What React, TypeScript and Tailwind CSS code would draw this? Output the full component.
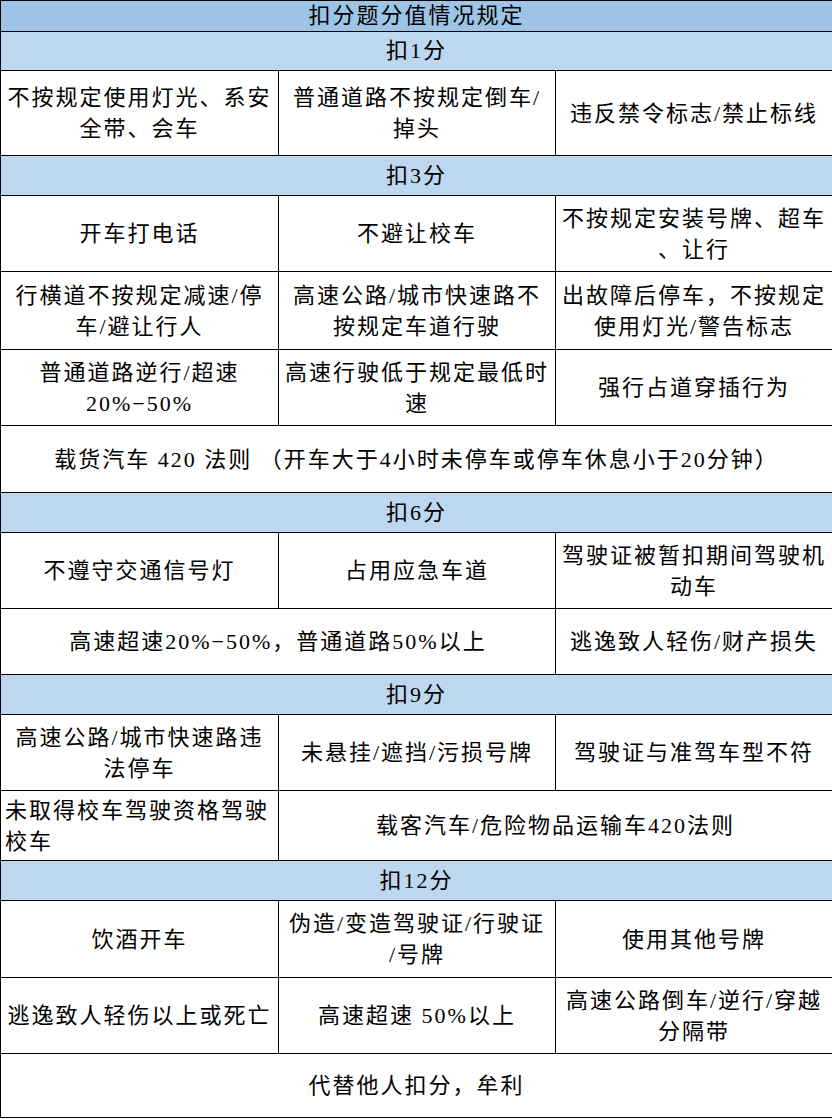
import type { ReactNode } from "react";

const font = "font-['Liberation_Serif','Noto_Sans_CJK_SC',serif]";

function Band({ children, dark, h }: { children: ReactNode; dark?: boolean; h: string }) {
	return (
		<tr className={h}>
			<td
				colSpan={3}
				className={`border border-black text-center text-[22px] leading-[28px] tracking-[2px] ${
					dark ? "bg-[#9dc3e6]" : "bg-[#bdd7ee]"
				}`}
			>
				{children}
			</td>
		</tr>
	);
}

function Cell({
	children,
	span,
	left,
}: {
	children: ReactNode;
	span?: number;
	left?: boolean;
}) {
	return (
		<td
			colSpan={span}
			className={`border border-black px-1 align-middle text-[22px] leading-[31px] tracking-[2px] ${
				left ? "text-left" : "text-center"
			}`}
		>
			{children}
		</td>
	);
}

export default function App() {
	return (
		<div className={`h-[1119px] w-[832px] bg-white text-black ${font}`}>
			<table className="w-[832px] table-fixed border-collapse">
				<colgroup>
					<col className="w-[278px]" />
					<col className="w-[277px]" />
					<col className="w-[277px]" />
				</colgroup>
				<tbody>
					<Band dark h="h-[31px]">
						扣分题分值情况规定
					</Band>
					<Band h="h-[39px]">扣1分</Band>
					<tr className="h-[85px]">
						<Cell>
							不按规定使用灯光、系安
							<br />
							全带、会车
						</Cell>
						<Cell>
							普通道路不按规定倒车/
							<br />
							掉头
						</Cell>
						<Cell>违反禁令标志/禁止标线</Cell>
					</tr>

					<Band h="h-[40px]">扣3分</Band>
					<tr className="h-[76px]">
						<Cell>开车打电话</Cell>
						<Cell>不避让校车</Cell>
						<Cell>
							不按规定安装号牌、超车
							<br />
							、让行
						</Cell>
					</tr>
					<tr className="h-[78px]">
						<Cell>
							行横道不按规定减速/停
							<br />
							车/避让行人
						</Cell>
						<Cell>
							高速公路/城市快速路不
							<br />
							按规定车道行驶
						</Cell>
						<Cell>
							出故障后停车，不按规定
							<br />
							使用灯光/警告标志
						</Cell>
					</tr>
					<tr className="h-[76px]">
						<Cell>
							普通道路逆行/超速
							<br />
							20%−50%
						</Cell>
						<Cell>
							高速行驶低于规定最低时
							<br />
							速
						</Cell>
						<Cell>强行占道穿插行为</Cell>
					</tr>
					<tr className="h-[67px]">
						<Cell span={3}>
							载货汽车 420 法则 （开车大于4小时未停车或停车休息小于20分钟）
						</Cell>
					</tr>

					<Band h="h-[40px]">扣6分</Band>
					<tr className="h-[76px]">
						<Cell>不遵守交通信号灯</Cell>
						<Cell>占用应急车道</Cell>
						<Cell>
							驾驶证被暂扣期间驾驶机
							<br />
							动车
						</Cell>
					</tr>
					<tr className="h-[66px]">
						<Cell span={2}>高速超速20%−50%，普通道路50%以上</Cell>
						<Cell>逃逸致人轻伤/财产损失</Cell>
					</tr>

					<Band h="h-[40px]">扣9分</Band>
					<tr className="h-[76px]">
						<Cell>
							高速公路/城市快速路违
							<br />
							法停车
						</Cell>
						<Cell>未悬挂/遮挡/污损号牌</Cell>
						<Cell>驾驶证与准驾车型不符</Cell>
					</tr>
					<tr className="h-[70px]">
						<Cell left>
							未取得校车驾驶资格驾驶
							<br />
							校车
						</Cell>
						<Cell span={2}>载客汽车/危险物品运输车420法则</Cell>
					</tr>

					<Band h="h-[40px]">扣12分</Band>
					<tr className="h-[77px]">
						<Cell>饮酒开车</Cell>
						<Cell>
							伪造/变造驾驶证/行驶证
							<br />
							/号牌
						</Cell>
						<Cell>使用其他号牌</Cell>
					</tr>
					<tr className="h-[76px]">
						<Cell>逃逸致人轻伤以上或死亡</Cell>
						<Cell>高速超速 50%以上</Cell>
						<Cell>
							高速公路倒车/逆行/穿越
							<br />
							分隔带
						</Cell>
					</tr>
					<tr className="h-[64px]">
						<Cell span={3}>代替他人扣分，牟利</Cell>
					</tr>
				</tbody>
			</table>
		</div>
	);
}
